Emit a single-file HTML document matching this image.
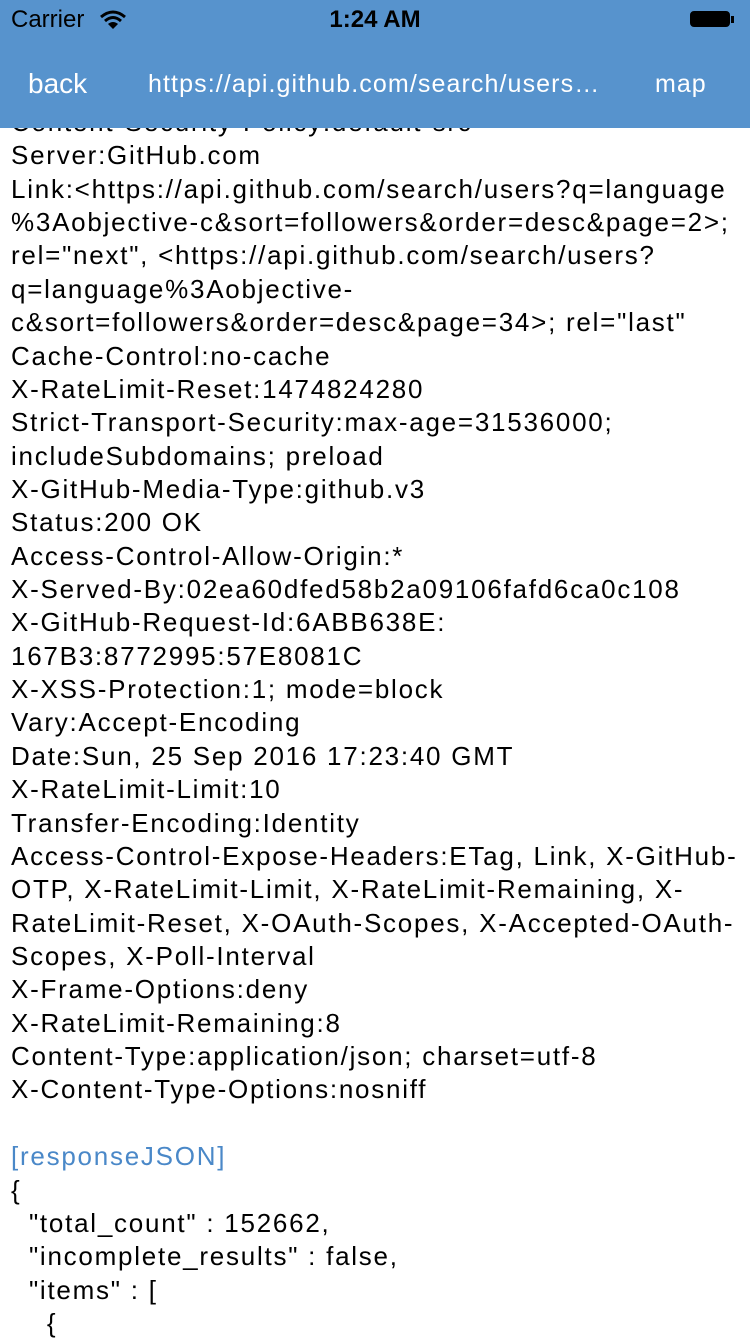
<!DOCTYPE html>
<html><head><meta charset="utf-8"><style>
body{margin:0;width:750px;height:1334px;overflow:hidden;background:#fff;position:relative;font-family:"Liberation Sans",Arial,sans-serif}
.nav{position:absolute;left:0;top:0;width:750px;height:128px;background:#5793cd;z-index:2}
.st{position:absolute;top:6px;font-size:24px;color:#000}
.nb{position:absolute;top:66px;font-size:27px;color:#fff}
.txt{position:absolute;left:11px;top:106px;font-size:26px;line-height:33.36px;color:#000;white-space:pre;letter-spacing:1.75px}
.blue{color:#4a88c8}
</style></head><body>
<div class="nav">
<div class="st" style="left:11px">Carrier</div>
<svg style="position:absolute;left:99px;top:10px" width="28" height="20" viewBox="0 0 28 20"><path d="M2 7Q14 -3 26 7" stroke="#000" stroke-width="3" fill="none"/><path d="M6 11Q14 4 22 11" stroke="#000" stroke-width="3" fill="none"/><path d="M14 19L9 14Q14 10 19 14Z" fill="#000"/></svg>
<div class="st" style="left:0;width:750px;text-align:center;font-weight:bold">1:24 AM</div>
<div style="position:absolute;left:690px;top:11px;width:40px;height:16px;border:2px solid #000;border-radius:4px;background:#000;box-sizing:border-box"></div>
<div style="position:absolute;left:731px;top:16px;width:3px;height:7px;background:#000"></div>
<div class="nb" style="left:28px;font-size:28px;top:68px">back</div>
<div class="nb" style="left:148px;font-size:25px;top:70px;letter-spacing:1.1px">https://api.github.com/search/users…</div>
<div class="nb" style="left:655px;font-size:25px;top:70px;letter-spacing:1px">map</div>
</div>
<div class="txt">Content-Security-Policy:default-src
Server:GitHub.com
Link:&lt;https://api.github.com/search/users?q=language
%3Aobjective-c&amp;sort=followers&amp;order=desc&amp;page=2&gt;;
rel="next", &lt;https://api.github.com/search/users?
q=language%3Aobjective-
c&amp;sort=followers&amp;order=desc&amp;page=34&gt;; rel="last"
Cache-Control:no-cache
X-RateLimit-Reset:1474824280
Strict-Transport-Security:max-age=31536000;
includeSubdomains; preload
X-GitHub-Media-Type:github.v3
Status:200 OK
Access-Control-Allow-Origin:*
X-Served-By:02ea60dfed58b2a09106fafd6ca0c108
X-GitHub-Request-Id:6ABB638E:
167B3:8772995:57E8081C
X-XSS-Protection:1; mode=block
Vary:Accept-Encoding
Date:Sun, 25 Sep 2016 17:23:40 GMT
X-RateLimit-Limit:10
Transfer-Encoding:Identity
Access-Control-Expose-Headers:ETag, Link, X-GitHub-
OTP, X-RateLimit-Limit, X-RateLimit-Remaining, X-
RateLimit-Reset, X-OAuth-Scopes, X-Accepted-OAuth-
Scopes, X-Poll-Interval
X-Frame-Options:deny
X-RateLimit-Remaining:8
Content-Type:application/json; charset=utf-8
X-Content-Type-Options:nosniff

<span class="blue">[responseJSON]</span>
{
  "total_count" : 152662,
  "incomplete_results" : false,
  "items" : [
    {</div>
</body></html>
